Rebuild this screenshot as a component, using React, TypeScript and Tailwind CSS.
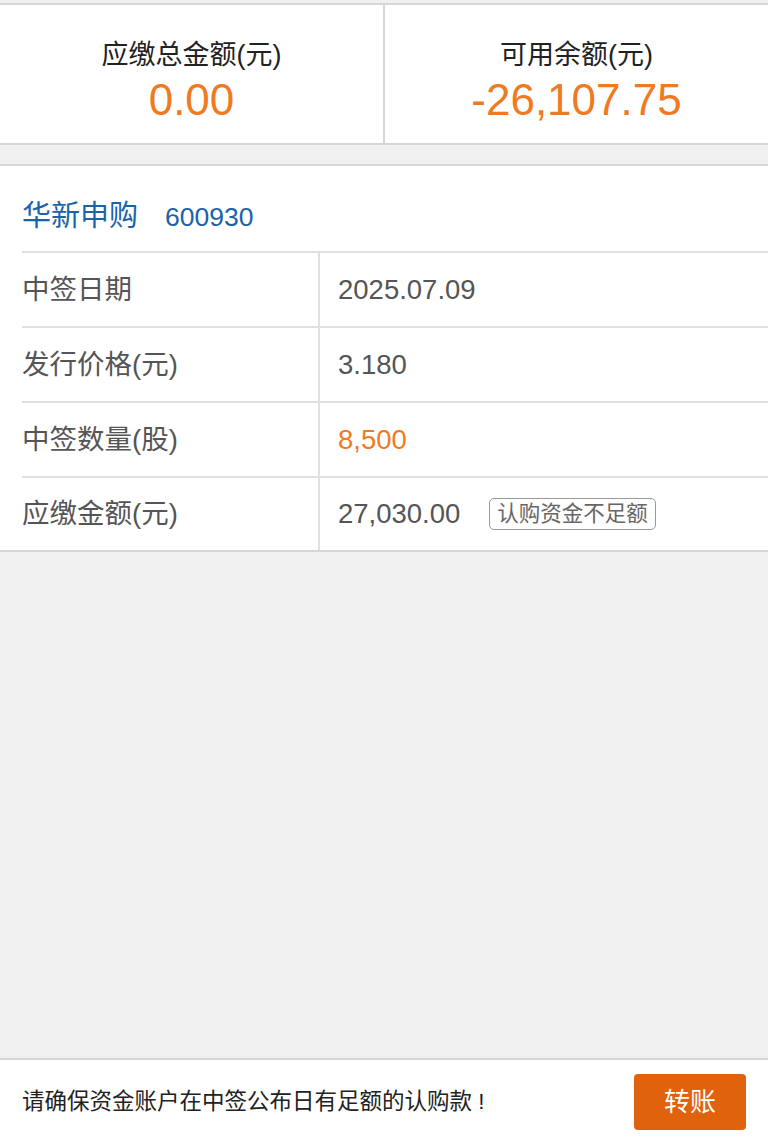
import React from 'react';

const rows = [
  { label: '中签日期', value: '2025.07.09', orange: false, tag: '' },
  { label: '发行价格(元)', value: '3.180', orange: false, tag: '' },
  { label: '中签数量(股)', value: '8,500', orange: true, tag: '' },
  { label: '应缴金额(元)', value: '27,030.00', orange: false, tag: '认购资金不足额' },
];

const App: React.FC = () => {
  return (
    <div className="flex flex-col h-[1144px] w-[768px] bg-[#f0f0f0] font-['Liberation_Sans','Noto_Sans_CJK_SC',sans-serif] overflow-hidden">
      {/* Summary */}
      <div className="mt-[3px] flex h-[142px] bg-white border-y-2 border-[#d6d6d6]">
        <div className="flex-1 flex flex-col items-center pt-[30px]">
          <div className="text-[27px] leading-[40px] text-[#222]">应缴总金额(元)</div>
          <div className="text-[44px] leading-[50px] text-[#f07a22]">0.00</div>
        </div>
        <div className="w-[2px] bg-[#d6d6d6]" />
        <div className="flex-1 flex flex-col items-center pt-[30px]">
          <div className="text-[27px] leading-[40px] text-[#222]">可用余额(元)</div>
          <div className="text-[44px] leading-[50px] text-[#f07a22]">-26,107.75</div>
        </div>
      </div>

      {/* Detail card */}
      <div className="mt-[19px] bg-white border-y-2 border-[#d6d6d6]">
        <div className="flex items-baseline h-[85px] pl-[22px] pt-[30px]">
          <span className="text-[29px] leading-[40px] text-[#1b63a8]">华新申购</span>
          <span className="ml-[27px] text-[26.5px] leading-[40px] text-[#1b63a8]">600930</span>
        </div>
        <div className="ml-[22px]">
          {rows.map((r, i) => (
            <div
              key={r.label}
              className={`flex border-t-2 border-[#e0e0e0] ${i === rows.length - 1 ? 'h-[74px]' : 'h-[75px]'}`}
            >
              <div className="w-[298px] flex items-center text-[27.5px] text-[#555] border-r-2 border-[#e0e0e0]">
                {r.label}
              </div>
              <div className="flex-1 flex items-center pl-[18px]">
                <span className={`text-[27.5px] ${r.orange ? 'text-[#f07a22]' : 'text-[#555]'}`}>{r.value}</span>
                {r.tag && (
                  <span className="ml-[29px] border border-[#999] rounded-[5px] px-[7px] text-[21.5px] leading-[30px] text-[#666]">
                    {r.tag}
                  </span>
                )}
              </div>
            </div>
          ))}
        </div>
      </div>

      <div className="flex-1" />

      {/* Footer */}
      <div className="h-[86px] bg-white border-t-2 border-[#d6d6d6] flex items-center justify-between pl-[22px] pr-[22px]">
        <span className="text-[22.5px] text-[#222]">请确保资金账户在中签公布日有足额的认购款 !</span>
        <button className="w-[112px] h-[56px] rounded-[4px] bg-[#e0620d] text-white text-[26px]">转账</button>
      </div>
    </div>
  );
};

export default App;
